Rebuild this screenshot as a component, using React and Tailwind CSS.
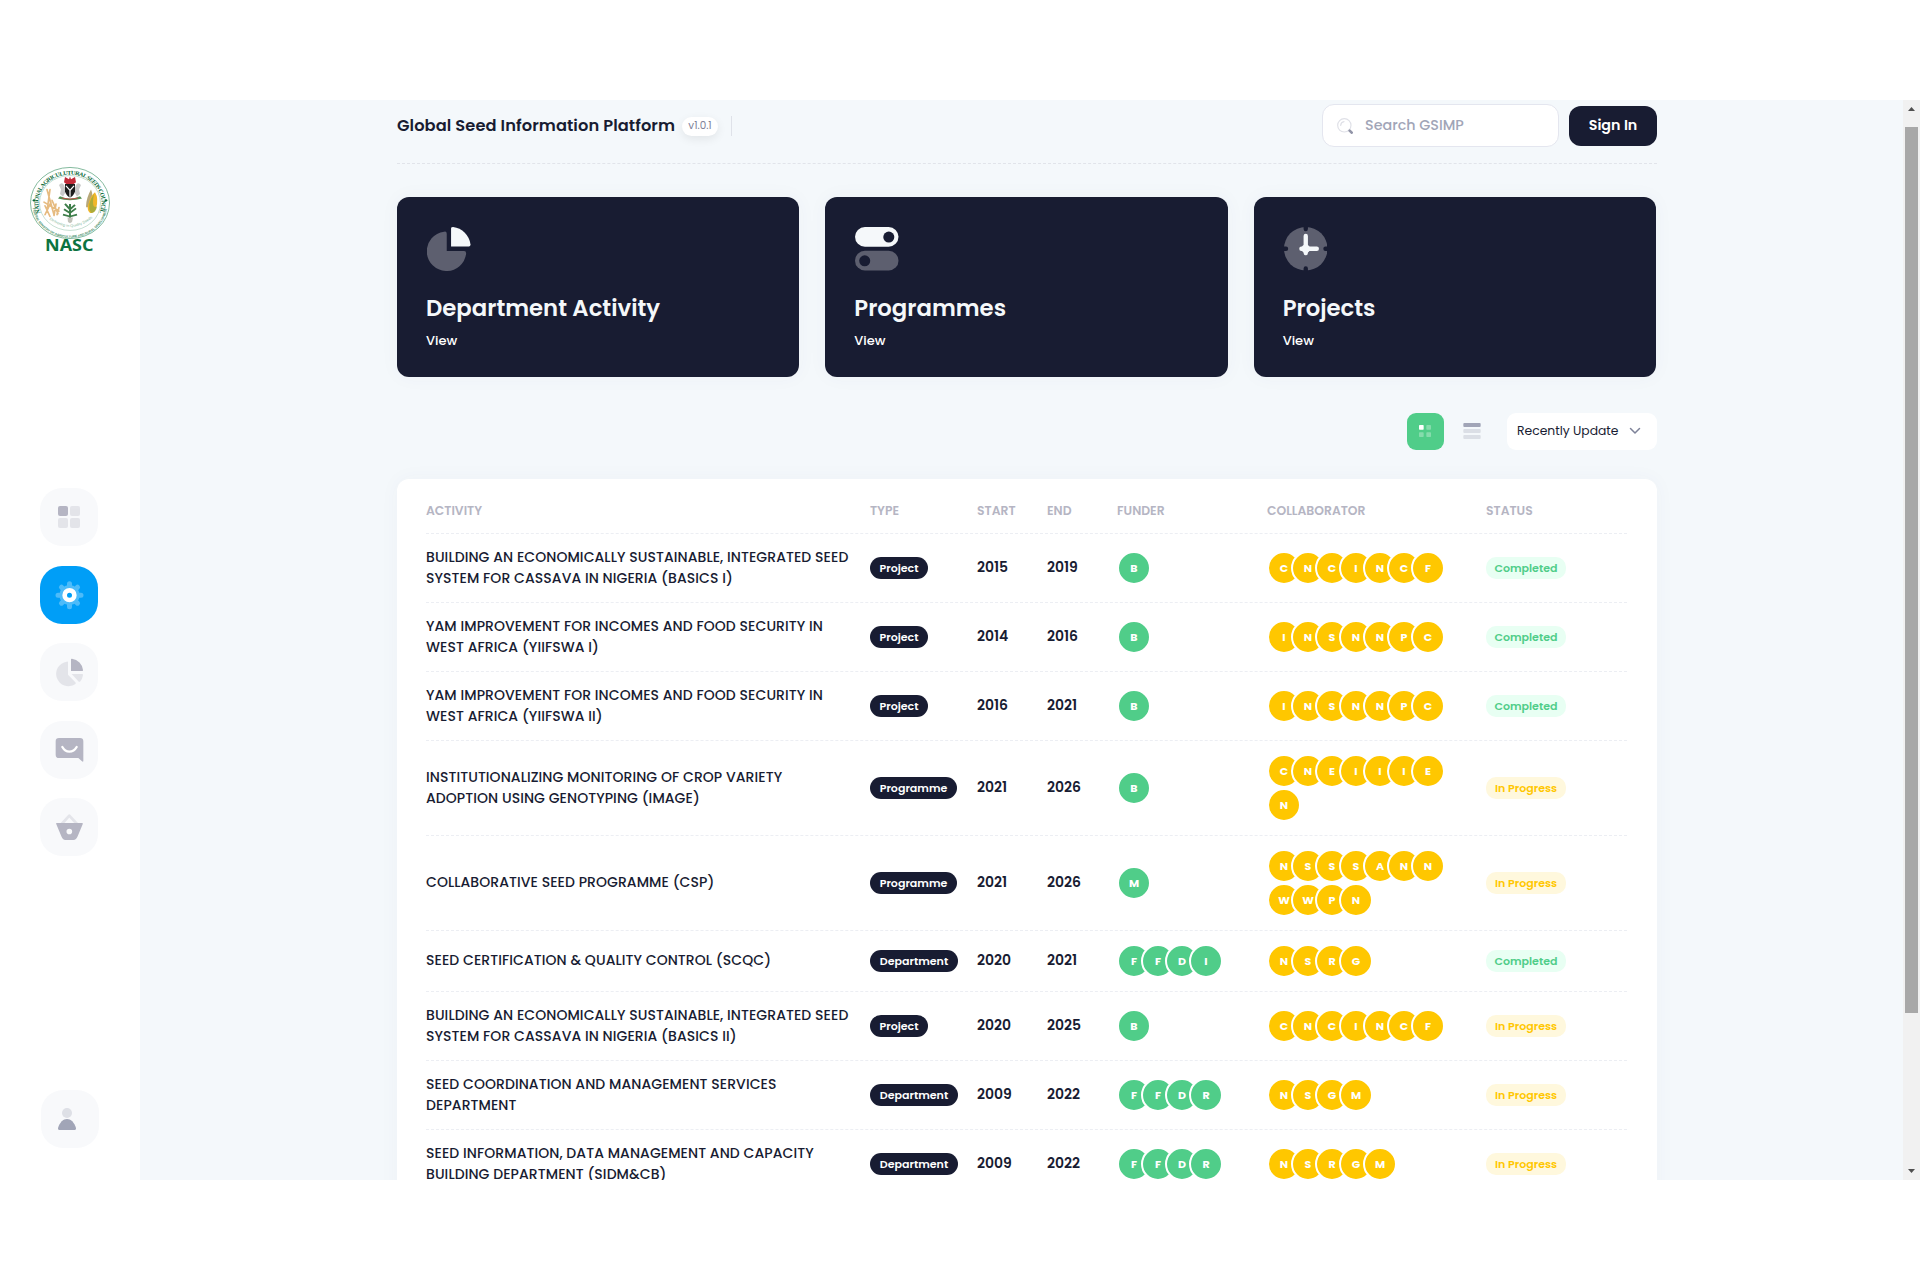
import React from "react";

const NAV_ICON = "h-[58px] w-[58px]";

function GridIcon() {
  return (
    <svg viewBox="0 0 174 174" className={NAV_ICON} fill="#b5b5c3">
      <rect x="54" y="54" width="30" height="30" rx="6" />
      <g opacity="0.3">
        <rect x="90" y="54" width="30" height="30" rx="6" />
        <rect x="54" y="90" width="30" height="30" rx="6" />
        <rect x="90" y="90" width="30" height="30" rx="6" />
      </g>
    </svg>
  );
}

function GearIcon() {
  return (
    <svg viewBox="0 0 174 174" className={NAV_ICON}>
      <g opacity="0.3" stroke="#fff">
        <circle cx="88.500" cy="87.500" r="30.500" fill="#fff" stroke="none" />
        <path d="M88.500 53V122M54 87.500H123M64.500 63.500L112.500 111.500M112.500 63.500L64.500 111.500" strokeWidth="15" strokeLinecap="round" />
      </g>
      <circle cx="88.500" cy="87.500" r="14.500" fill="#009ef7" stroke="#fff" strokeWidth="14" />
    </svg>
  );
}

function PieIcon() {
  return (
    <svg viewBox="0 0 174 174" className={NAV_ICON} fill="#b5b5c3">
      <path d="M93 49Q93 47 96 47.500A37 37 0 0 1 129 81Q130 84 127 84H93Z" />
      <g opacity="0.3">
        <path d="M84 58Q84 55 80 56A37 37 0 1 0 105 124Q109 121 106 118L84 95Z" />
        <path d="M95 93H126Q130 93 129 97Q127 108 121 115Q118 118 115 115Z" />
      </g>
    </svg>
  );
}

function ChatIcon() {
  return (
    <svg viewBox="0 0 174 174" className={NAV_ICON}>
      <path d="M57 51H120Q130 51 130 61V119Q130 124 126 121L115 111H57Q47 111 47 101V61Q47 51 57 51Z" fill="#b5b5c3" />
      <path d="M67 78Q75 92 88 92Q102 92 110 78" fill="none" stroke="#fff" strokeWidth="7" strokeLinecap="round" />
    </svg>
  );
}

function BasketIcon() {
  return (
    <svg viewBox="0 0 174 174" className={NAV_ICON}>
      <path d="M65 78L88 53L111 78" fill="none" stroke="#b5b5c3" strokeOpacity="0.3" strokeWidth="8" strokeLinejoin="round" />
      <path
        fillRule="evenodd"
        d="M50 75H126Q130 75 128 79L113 115Q109 126 100 126H76Q68 126 64 115L49 79Q47 75 50 75ZM88 92A8.500 8.500 0 1 0 88 109A8.500 8.500 0 1 0 88 92Z"
        fill="#b5b5c3"
      />
    </svg>
  );
}

function UserIcon() {
  return (
    <svg viewBox="0 0 174 174" className={NAV_ICON} fill="#a1a5b7">
      <circle cx="78" cy="69" r="15" opacity="0.3" />
      <path d="M54 120Q50 119 51 114C56 97 67 87 78 87C89 87 100 97 105 114Q106 119 102 120Z" />
    </svg>
  );
}

function NavButton({ active, children }) {
  return (
    <div className={"h-[58px] w-[58px] rounded-[22px] " + (active ? "bg-[#009ef7]" : "bg-[#f8f9fb]")}>
      {children}
    </div>
  );
}

function Logo() {
  return (
    <svg viewBox="0 0 84 92" className="h-[92px] w-[84px]">
      <defs>
        <path id="ringTop" d="M12.500 52A31.500 31.500 0 1 1 71.500 52" />
        <path id="ringBottom" d="M4.500 42A37.500 37.500 0 0 0 79.500 42" />
        <path id="ringMotto" d="M19 57Q42 78 65 57" />
      </defs>
      <g transform="translate(0 1.1) scale(1 0.9)">
        <circle cx="42" cy="41" r="39.500" fill="#fff" stroke="#6fae8d" strokeWidth="0.9" />
        <circle cx="42" cy="41" r="30.500" fill="none" stroke="#a9cfbb" strokeWidth="0.7" />
        <text fill="#0b6b3a" className="font-['Liberation_Serif',serif] text-[6.300px] font-bold">
          <textPath href="#ringTop" startOffset="0" textLength="121" lengthAdjust="spacing">
            NATIONAL AGRICULUTURAL SEEDS COUNCIL
          </textPath>
        </text>
        <text fill="#3f8d66" className="font-['Liberation_Sans',sans-serif] text-[3.400px] font-bold">
          <textPath href="#ringBottom" startOffset="5" textLength="107">
            FEDERAL MINISTRY OF AGRICULTURE AND RURAL DEVELOPMENT
          </textPath>
        </text>
        <text fill="#83b79c" className="font-['Liberation_Sans',sans-serif] text-[4px]">
          <textPath href="#ringMotto" startOffset="3">Delivering in Quality Seeds</textPath>
        </text>
        <circle cx="6" cy="38" r="1.300" fill="#0b6b3a" />
        <circle cx="78" cy="38" r="1.300" fill="#0b6b3a" />
        <path d="M37 12l4 2.500 1-3 1 3 4-2.500 1 6-3 2.500h-6l-3-2.500z" fill="#c22b38" />
        <path d="M31 21q3-4 5 0l2 7-3 6-3-3 1-5zM53 21q-3-4-5 0l-2 7 3 6 3-3-1-5z" fill="#c9c9c9" />
        <path d="M37 20h10v8q-1 5-5 7-4-2-5-7z" fill="#1d1d1d" />
        <path d="M42 26v8M42 27l-4-5M42 27l4-5" stroke="#fff" strokeWidth="1.200" fill="none" />
        <path d="M32 33.500q10 5 20 0l2 2.500q-12 4-24 0z" fill="#559052" />
        <path d="M34 35.500q8 2.500 16 0" stroke="#c94646" strokeWidth="0.900" fill="none" />
        <g stroke="#e6bb80" strokeWidth="1.700" fill="none" strokeLinecap="round">
          <path d="M19 26L26 54M22 26L19 50M23 40L17 54M16 40L31 50M17 44L22 56M28 42L26 55M31 46L29 54M24 38L30 53" />
        </g>
        <path d="M63 26q3 7-1 17-3 5-4 2 0-9 5-19z" fill="#b7a778" />
        <path d="M67 29q4 7 1 18-2 6-6 5-4-3-1-12 2-8 6-11z" fill="#f0b62b" />
        <path d="M66 31q-8 12-3 21 5 0 6-7-6 3-3-14z" fill="#8da640" opacity="0.7" />
        <path d="M42 58V42M42 52l-6-4M42 52l6-5M42 48l-5-6M42 48l5-5M42 56l-7-2M42 56l7-2" stroke="#3d7d49" strokeWidth="2" fill="none" />
        <path d="M39.500 57h5.500l-1 5-2 1.500-2-1.500z" fill="#c3c3bb" />
      </g>
      <text x="17" y="86" textLength="48.500" lengthAdjust="spacingAndGlyphs" fill="#0b7341" className="font-['Open_Sans',sans-serif] text-[16.500px] font-bold">
        NASC
      </text>
    </svg>
  );
}

function Sidebar() {
  return (
    <aside className="flex h-full w-[140px] shrink-0 flex-col items-center bg-white">
      <div className="mt-[65px] h-[92px]">
        <Logo />
      </div>
      <nav className="mt-[231px] mr-[2px] flex flex-col gap-[19.500px]">
        <NavButton><GridIcon /></NavButton>
        <NavButton active><GearIcon /></NavButton>
        <NavButton><PieIcon /></NavButton>
        <NavButton><ChatIcon /></NavButton>
        <NavButton><BasketIcon /></NavButton>
      </nav>
      <div className="mt-auto mb-[32px]">
        <NavButton><UserIcon /></NavButton>
      </div>
    </aside>
  );
}

function SearchIcon() {
  return (
    <svg viewBox="0 0 48 48" className="h-4 w-4">
      <circle cx="22" cy="22" r="20" fill="none" stroke="#dfe0e7" strokeWidth="3.500" />
      <path d="M11 22Q12 12 21 11" fill="none" stroke="#dfe0e7" strokeWidth="3.500" strokeLinecap="round" />
      <path d="M38 38L44 44" stroke="#9295a8" strokeWidth="8" strokeLinecap="round" />
    </svg>
  );
}

function Header() {
  return (
    <header className="flex h-[64px] justify-between border-b border-dashed border-[#e1e4ea]">
      <div className="mt-[16px] flex h-[20px] items-center">
        <h1 className="w-[285px] text-[16.250px] leading-5 font-semibold tracking-[0.080px] whitespace-nowrap text-[#181c32]">
          Global Seed Information Platform
        </h1>
        <span className="flex h-[19px] w-[36px] items-center justify-center rounded-full bg-white pb-px text-[10.400px] text-[#7e8299] shadow-[0_3px_10px_rgba(0,0,0,0.08)]">
          v1.0.1
        </span>
        <span className="ml-[13px] h-5 w-px bg-[#dfe2e9]" />
      </div>
      <div className="flex items-start">
        <div className="mt-[4px] flex h-[43px] w-[237px] items-center rounded-[12px] border border-[#e4e6ef] bg-white pl-[14px]">
          <SearchIcon />
          <span className="ml-[12px] text-[14.300px] font-medium text-[#a1a5b7]">Search GSIMP</span>
        </div>
        <button className="mt-[6px] ml-[10px] h-10 w-[88px] rounded-[12px] bg-[#181c32] pb-px text-[14.300px] font-semibold text-white">
          Sign In
        </button>
      </div>
    </header>
  );
}

const CARD_ICON = "ml-px h-[43.500px] w-[43.500px]";

function CardPie() {
  return (
    <svg viewBox="0 0 130 130" className={CARD_ICON}>
      <path d="M59 20Q59 12 51 14A59 59 0 1 0 117 79Q117 72 111 72H59Z" fill="#5d5f6f" />
      <path d="M72 4Q72 0 78 0A60 60 0 0 1 130 52Q130 58 125 58H72Z" fill="#f5f8fa" />
    </svg>
  );
}

function CardToggles() {
  return (
    <svg viewBox="0 0 130 130" className={CARD_ICON}>
      <rect width="130" height="59" rx="29.500" fill="#f5f8fa" />
      <circle cx="101" cy="30" r="16.500" fill="#181c32" />
      <rect y="71" width="130" height="59" rx="29.500" fill="#5d5f6f" />
      <circle cx="29" cy="101" r="16.500" fill="#181c32" />
    </svg>
  );
}

function CardClock() {
  return (
    <svg viewBox="0 0 130 130" className={CARD_ICON}>
      <circle cx="65" cy="65" r="65" fill="#5d5f6f" />
      <path d="M65 -4V6M65 124V134M-4 65H6M124 65H134" stroke="#181c32" strokeWidth="13" strokeLinecap="round" />
      <path d="M65 27V78M52 65H98" stroke="#f5f8fa" strokeWidth="13" strokeLinecap="round" />
      <circle cx="65" cy="65" r="13" fill="#f5f8fa" />
    </svg>
  );
}

function StatCard({ icon, title }) {
  return (
    <div className="flex h-[180px] flex-col rounded-[12px] bg-[#181c32] px-[29px] pt-[30px] text-[#f5f8fa] shadow-[0_0_20px_rgba(76,87,125,0.04)]">
      {icon}
      <h2 className="mt-[20.500px] text-[22.750px] leading-[34px] font-semibold">{title}</h2>
      <span className="mt-[6px] text-[13px] leading-5 font-medium text-white">View</span>
    </div>
  );
}

function Toolbar() {
  return (
    <div className="mt-[36px] flex h-[37px] items-center justify-end">
      <span className="flex h-[37px] w-[37px] items-center justify-center rounded-[9px] bg-[#50cd89]">
        <svg viewBox="0 0 36 36" className="mr-px mb-px h-3 w-3" fill="#fff">
          <rect width="14" height="14" rx="2" />
          <g opacity="0.3">
            <rect x="22" width="14" height="14" rx="2" />
            <rect y="22" width="14" height="14" rx="2" />
            <rect x="22" y="22" width="14" height="14" rx="2" />
          </g>
        </svg>
      </span>
      <svg viewBox="0 0 54 48" className="mb-px ml-[19px] h-4 w-[18px]" fill="#a1a5b7">
        <rect x="1" width="52" height="12" rx="3" />
        <rect x="1" y="18" width="52" height="12" rx="3" opacity="0.3" />
        <rect x="1" y="36" width="52" height="12" rx="3" opacity="0.3" />
      </svg>
      <div className="ml-[26px] flex h-[37px] w-[150px] items-center rounded-[9px] bg-white pb-px pl-[10px]">
        <span className="w-[100px] text-[12.350px] whitespace-nowrap text-[#181c32]">Recently Update</span>
        <svg viewBox="0 0 12 8" className="ml-[12px] h-2 w-3" fill="none" stroke="#7e8299" strokeWidth="1.500" strokeLinecap="round" strokeLinejoin="round">
          <path d="M1.500 1.500L6 6L10.500 1.500" />
        </svg>
      </div>
    </div>
  );
}

const ROWS = [
  { name: ["BUILDING AN ECONOMICALLY SUSTAINABLE, INTEGRATED SEED", "SYSTEM FOR CASSAVA IN NIGERIA (BASICS I)"], type: "Project", start: 2015, end: 2019, funders: "B", people: "CNCINCF", done: true, height: "h-[69px]" },
  { name: ["YAM IMPROVEMENT FOR INCOMES AND FOOD SECURITY IN", "WEST AFRICA (YIIFSWA I)"], type: "Project", start: 2014, end: 2016, funders: "B", people: "INSNNPC", done: true, height: "h-[69px]" },
  { name: ["YAM IMPROVEMENT FOR INCOMES AND FOOD SECURITY IN", "WEST AFRICA (YIIFSWA II)"], type: "Project", start: 2016, end: 2021, funders: "B", people: "INSNNPC", done: true, height: "h-[69px]" },
  { name: ["INSTITUTIONALIZING MONITORING OF CROP VARIETY", "ADOPTION USING GENOTYPING (IMAGE)"], type: "Programme", start: 2021, end: 2026, funders: "B", people: "CNEIIIEN", done: false, height: "h-[95px]" },
  { name: ["COLLABORATIVE SEED PROGRAMME (CSP)"], type: "Programme", start: 2021, end: 2026, funders: "M", people: "NSSSANNWWPN", done: false, height: "h-[95px]" },
  { name: ["SEED CERTIFICATION & QUALITY CONTROL (SCQC)"], type: "Department", start: 2020, end: 2021, funders: "FFDI", people: "NSRG", done: true, height: "h-[61px]" },
  { name: ["BUILDING AN ECONOMICALLY SUSTAINABLE, INTEGRATED SEED", "SYSTEM FOR CASSAVA IN NIGERIA (BASICS II)"], type: "Project", start: 2020, end: 2025, funders: "B", people: "CNCINCF", done: false, height: "h-[69px]" },
  { name: ["SEED COORDINATION AND MANAGEMENT SERVICES", "DEPARTMENT"], type: "Department", start: 2009, end: 2022, funders: "FFDR", people: "NSGM", done: false, height: "h-[69px]" },
  { name: ["SEED INFORMATION, DATA MANAGEMENT AND CAPACITY", "BUILDING DEPARTMENT (SIDM&CB)"], type: "Department", start: 2009, end: 2022, funders: "FFDR", people: "NSRGM", done: false, height: "h-[69px]" },
];

const COLUMNS = "grid grid-cols-[444px_107px_70px_70px_150px_219px_140px] items-center border-b border-dashed border-[#eceef3]";

const TYPE_WIDTH = { Project: "w-[58px]", Programme: "w-[87px]", Department: "w-[88px]" };

function Bubbles({ letters, color }) {
  return (
    <div className="flex w-[180px] flex-wrap">
      {letters.split("").map((letter, i) => (
        <span
          key={i}
          className={"-mr-[10px] flex h-[34px] w-[34px] items-center justify-center rounded-full border-2 border-white text-[11.050px] font-bold text-white " + color}
        >
          {letter}
        </span>
      ))}
    </div>
  );
}

function ActivityTable() {
  return (
    <section className="mt-[29px] rounded-t-[12px] bg-white pr-[30px] pb-8 pl-[29px] shadow-[0_0_20px_rgba(76,87,125,0.04)]">
      <div className={COLUMNS + " h-[55px] pt-[10px] text-[12.350px] font-semibold text-[#b5b5c3]"}>
        <span>ACTIVITY</span>
        <span>TYPE</span>
        <span>START</span>
        <span>END</span>
        <span>FUNDER</span>
        <span>COLLABORATOR</span>
        <span>STATUS</span>
      </div>
      {ROWS.map((row, i) => (
        <div key={i} className={COLUMNS + " " + row.height}>
          <div className={"text-[14px] leading-[21px] font-medium tracking-[0.070px] whitespace-nowrap text-[#181c32]" + (row.name.length === 1 ? " pb-px" : "")}>
            {row.name.map((line) => (
              <p key={line}>{line}</p>
            ))}
          </div>
          <span className={"flex h-[22px] items-center justify-center rounded-full bg-[#181c32] text-[11.050px] font-semibold text-white " + TYPE_WIDTH[row.type]}>
            {row.type}
          </span>
          <span className="pb-px text-[13.975px] font-semibold text-[#181c32]">{row.start}</span>
          <span className="pb-px text-[13.975px] font-semibold text-[#181c32]">{row.end}</span>
          <Bubbles letters={row.funders} color="bg-[#50cd89]" />
          <Bubbles letters={row.people} color="bg-[#ffc700]" />
          <span
            className={
              "flex h-[22px] w-[80px] items-center justify-center rounded-[10px] text-[11.050px] font-semibold " +
              (row.done ? "bg-[#e8fff3] text-[#50cd89]" : "bg-[#fff8dd] text-[#ffc700]")
            }
          >
            {row.done ? "Completed" : "In Progress"}
          </span>
        </div>
      ))}
    </section>
  );
}

function Scrollbar() {
  return (
    <div className="flex h-full w-[17px] shrink-0 flex-col items-center bg-[#f1f1f1]">
      <svg viewBox="0 0 7 4" className="mt-[7px] h-1 w-[7px]" fill="#505050">
        <path d="M0 4L3.500 0L7 4Z" />
      </svg>
      <div className="mt-[16px] h-[886px] w-[13px] bg-[#a8a8a8]" />
      <svg viewBox="0 0 7 4" className="mt-auto mb-[7px] h-1 w-[7px]" fill="#505050">
        <path d="M0 0L3.500 4L7 0Z" />
      </svg>
    </div>
  );
}

export default function App() {
  return (
    <div className="h-[1280px] w-[1920px] overflow-hidden bg-white py-[100px] font-[Poppins,Inter,sans-serif]">
      <div className="flex h-[1080px] overflow-hidden">
        <Sidebar />
        <main className="h-full flex-1 overflow-hidden bg-[#f4f8fb] pl-[257px]">
          <div className="w-[1260px]">
            <Header />
            <div className="mt-[33px] mr-px grid grid-cols-3 gap-[26px]">
              <StatCard icon={<CardPie />} title="Department Activity" />
              <StatCard icon={<CardToggles />} title="Programmes" />
              <StatCard icon={<CardClock />} title="Projects" />
            </div>
            <Toolbar />
            <ActivityTable />
          </div>
        </main>
        <Scrollbar />
      </div>
    </div>
  );
}
